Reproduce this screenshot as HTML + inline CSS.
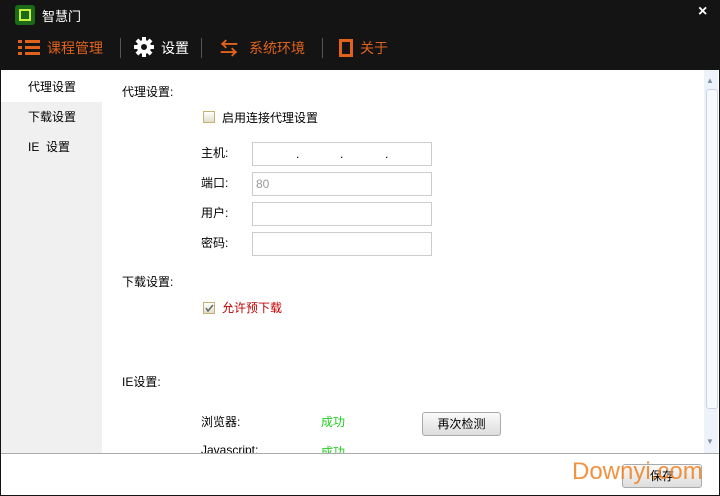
<!DOCTYPE html>
<html><head><meta charset="utf-8"><style>
*{margin:0;padding:0;box-sizing:border-box}
body{width:720px;height:496px;background:#141414;position:relative;overflow:hidden;font-family:"Liberation Sans","Noto Sans CJK SC",sans-serif;font-size:12px;color:#000}
.a{position:absolute}
.title{color:#fff;font-size:13px}
.nav{color:#e0621c;font-size:14px}
.sep{width:1px;height:20px;background:#555;top:38px}
.inp{border:1px solid #ccc;background:#fff;width:180px;height:24px;left:252px}
.lbl{left:201px;font-size:12px}
.cb{width:12px;height:12px;border:1px solid #c8b070;background:linear-gradient(#fff,#e0dccc)}
</style></head><body>
<div class="a" style="left:15px;top:5px;width:20px;height:20px;background:#1a6a1a;border-radius:3px"><div class="a" style="left:4px;top:4px;width:12px;height:12px;border:2px solid #c8f040"></div></div>
<div class="a title" style="left:42px;top:6px">智慧门</div>
<div class="a" style="left:698px;top:3px;color:#fff;font-size:16px;font-weight:bold">×</div>
<div class="a" style="left:18px;top:40px;width:22px;height:15px">
<div class="a" style="left:0;top:0;width:4px;height:3px;background:#e0621c"></div><div class="a" style="left:7px;top:0;width:15px;height:3px;background:#e0621c"></div>
<div class="a" style="left:0;top:6px;width:4px;height:3px;background:#e0621c"></div><div class="a" style="left:7px;top:6px;width:15px;height:3px;background:#e0621c"></div>
<div class="a" style="left:0;top:12px;width:4px;height:3px;background:#e0621c"></div><div class="a" style="left:7px;top:12px;width:15px;height:3px;background:#e0621c"></div></div>
<div class="a nav" style="left:47px;top:38px">课程管理</div>
<div class="a sep" style="left:120px"></div>
<svg class="a" style="left:134px;top:37px" width="20" height="20" viewBox="0 0 20 20"><g fill="#fff"><circle cx="10" cy="10" r="7"/><rect x="8" y="0" width="4" height="20"/><rect x="0" y="8" width="20" height="4"/><rect x="8" y="0" width="4" height="20" transform="rotate(45 10 10)"/><rect x="8" y="0" width="4" height="20" transform="rotate(-45 10 10)"/></g><circle cx="10" cy="10" r="3" fill="#141414"/></svg>
<div class="a nav" style="left:161px;top:38px;color:#fff">设置</div>
<div class="a sep" style="left:201px"></div>
<div class="a" style="left:220px;top:35px;color:#e0621c;font-size:18px;font-weight:bold">⇆</div>
<div class="a nav" style="left:249px;top:38px">系统环境</div>
<div class="a sep" style="left:322px"></div>
<div class="a" style="left:339px;top:39px;width:14px;height:18px;border:3px solid #e0621c"></div>
<div class="a nav" style="left:360px;top:38px">关于</div>

<div class="a" style="left:1px;top:70px;width:718px;height:425px;background:#fff"></div>
<div class="a" style="left:1px;top:70px;width:101px;height:383px;background:#f0f0f0"></div>
<div class="a" style="left:1px;top:70px;width:101px;height:32px;background:#fff"></div>
<div class="a" style="left:28px;top:78px">代理设置</div>
<div class="a" style="left:28px;top:108px">下载设置</div>
<div class="a" style="left:28px;top:138px">IE&nbsp;&nbsp;设置</div>
<div class="a" style="left:704px;top:70px;width:14px;height:383px;background:#eef3fa"></div>
<div class="a" style="left:706px;top:76px;color:#8090a0;font-size:8px">▲</div>
<div class="a" style="left:706px;top:89px;width:12px;height:320px;border:1px solid #c8d4e4;border-radius:3px;background:#f6f9fd"></div>
<div class="a" style="left:706px;top:437px;color:#8090a0;font-size:8px">▼</div>

<div class="a" style="left:122px;top:83px">代理设置:</div>
<div class="a cb" style="left:203px;top:111px"></div>
<div class="a" style="left:222px;top:109px">启用连接代理设置</div>
<div class="a lbl" style="top:144px">主机:</div><div class="a inp" style="top:142px"><span class="a" style="left:43px;top:4px">.</span><span class="a" style="left:87px;top:4px">.</span><span class="a" style="left:132px;top:4px">.</span></div>
<div class="a lbl" style="top:174px">端口:</div><div class="a inp" style="top:172px"><span class="a" style="left:3px;top:4px;color:#999">80</span></div>
<div class="a lbl" style="top:204px">用户:</div><div class="a inp" style="top:202px"></div>
<div class="a lbl" style="top:234px">密码:</div><div class="a inp" style="top:232px"></div>
<div class="a" style="left:122px;top:273px">下载设置:</div>
<div class="a cb" style="left:203px;top:302px"><svg width="10" height="10" style="position:absolute;left:0;top:0"><path d="M2 5 L4 8 L9 2" stroke="#666" stroke-width="1.5" fill="none"/></svg></div>
<div class="a" style="left:222px;top:299px;color:#c00000">允许预下载</div>
<div class="a" style="left:122px;top:373px">IE设置:</div>
<div class="a" style="left:201px;top:413px">浏览器:</div>
<div class="a" style="left:321px;top:413px;color:#22cc22">成功</div>
<div class="a" style="left:422px;top:412px;width:79px;height:24px;border:1px solid #aaa;border-radius:3px;background:linear-gradient(#fafafa,#ddd);text-align:center;line-height:22px">再次检测</div>
<div class="a" style="left:201px;top:443px;height:10px;overflow:hidden">Javascript:</div>
<div class="a" style="left:321px;top:443px;height:10px;overflow:hidden;color:#22cc22">成功</div>
<div class="a" style="left:1px;top:453px;width:718px;height:1px;background:#aaa"></div>
<div class="a" style="left:622px;top:464px;width:80px;height:24px;border:1px solid #aaa;border-radius:3px;background:linear-gradient(#fafafa,#ddd);text-align:center;line-height:22px">保存</div>
<div class="a" style="left:572px;top:458px;color:#f08020;font-size:24px;opacity:.85">Downyi.com</div>
</body></html>
